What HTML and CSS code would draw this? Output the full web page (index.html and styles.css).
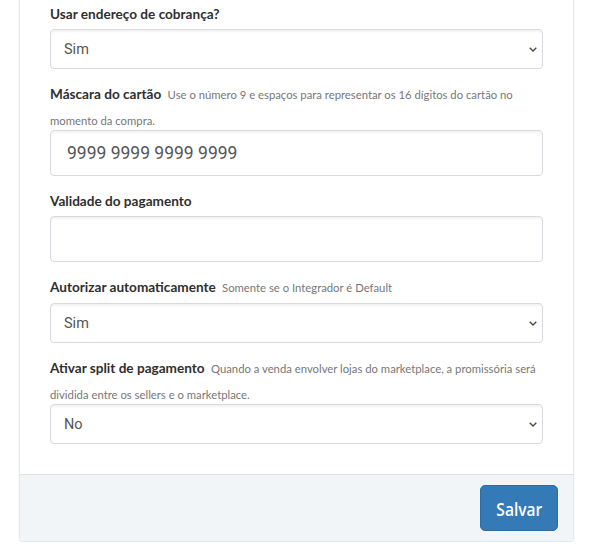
FILE: index.html
```html
<!DOCTYPE html>
<html lang="pt-BR">
<head>
<meta charset="utf-8">
<title>Pagamento</title>
<link rel="stylesheet" href="styles.css">
</head>
<body>
<div class="card">
  <div class="card-body">
    <div class="form-group">
      <label class="field-label">Usar endereço de cobrança?</label>
      <div class="select-wrap">
        <select class="form-control"><option>Sim</option><option>Não</option></select>
        <svg class="chevron" viewBox="0 0 8 5" width="8" height="5"><path d="M0.7 0.7 L4 4 L7.3 0.7" fill="none" stroke="#4a4a4a" stroke-width="1.4"/></svg>
      </div>
    </div>

    <div class="form-group">
      <label class="field-label field-label--wrap">Máscara do cartão <span class="help">Use o número 9 e espaços para representar os 16 dígitos do cartão no momento da compra.</span></label>
      <input class="form-control form-control--lg" type="text" value="9999 9999 9999 9999">
    </div>

    <div class="form-group">
      <label class="field-label">Validade do pagamento</label>
      <input class="form-control form-control--lg" type="text" value="">
    </div>

    <div class="form-group">
      <label class="field-label">Autorizar automaticamente <span class="help">Somente se o Integrador é Default</span></label>
      <div class="select-wrap">
        <select class="form-control"><option>Sim</option><option>Não</option></select>
        <svg class="chevron" viewBox="0 0 8 5" width="8" height="5"><path d="M0.7 0.7 L4 4 L7.3 0.7" fill="none" stroke="#4a4a4a" stroke-width="1.4"/></svg>
      </div>
    </div>

    <div class="form-group">
      <label class="field-label field-label--wrap">Ativar split de pagamento <span class="help">Quando a venda envolver lojas do marketplace, a promissória será dividida entre os sellers e o marketplace.</span></label>
      <div class="select-wrap">
        <select class="form-control"><option>No</option><option>Yes</option></select>
        <svg class="chevron" viewBox="0 0 8 5" width="8" height="5"><path d="M0.7 0.7 L4 4 L7.3 0.7" fill="none" stroke="#4a4a4a" stroke-width="1.4"/></svg>
      </div>
    </div>
  </div>
  <div class="card-footer">
    <button class="btn-primary" type="button"><span class="btn-text">Salvar</span></button>
  </div>
</div>
</body>
</html>
```

FILE: styles.css
```css
html, body {
  margin: 0;
  padding: 0;
  background: #ffffff;
}

body {
  font-family: Lato, "Open Sans", "Liberation Sans", sans-serif;
  color: #333333;
}

.card {
  margin: -16px 0 0 19px;
  width: 555px;
  box-sizing: border-box;
  background: #ffffff;
  border: 1px solid #e3e6ea;
  border-radius: 4px;
  box-shadow: 0 1px 2px rgba(0, 0, 0, 0.05);
}

.card-body {
  padding: 19px 30px 15px;
}

.form-group {
  margin-bottom: 15px;
}

.field-label {
  display: block;
  font-size: 13.6px;
  font-weight: 700;
  line-height: 20px;
  color: #2f2f2f;
  margin-bottom: 5px;
}

.field-label--wrap {
  line-height: 26px;
  margin-top: -3px;
  margin-bottom: -3px;
}

.help {
  font-size: 11.3px;
  font-weight: 400;
  line-height: 20px;
  color: #777777;
  margin-left: 3px;
}

.select-wrap {
  position: relative;
}

.form-control {
  display: block;
  width: 100%;
  box-sizing: border-box;
  height: 40px;
  padding: 0 13px;
  margin: 0;
  font-family: Roboto, "Liberation Sans", sans-serif;
  font-size: 14.5px;
  color: #555555;
  background: #ffffff;
  border: 1px solid #d7dade;
  border-radius: 4px;
  box-shadow: inset 0 2px 2px rgba(0, 0, 0, 0.05);
  outline: none;
  -webkit-appearance: none;
  appearance: none;
}

.form-control--lg {
  height: 46px;
  padding: 0 16px;
  font-size: 17.5px;
}

.chevron {
  position: absolute;
  right: 6px;
  top: 50%;
  margin-top: -2px;
  pointer-events: none;
}

.card-footer {
  display: flex;
  justify-content: flex-end;
  padding: 10px 15px 10px;
  background: #f2f5f8;
  border-top: 1px solid #dde2e7;
  border-radius: 0 0 4px 4px;
}

.btn-primary {
  width: 78px;
  height: 46px;
  padding: 0;
  background: #337ab7;
  border: 1px solid #2e6da4;
  border-radius: 5px;
  color: #ffffff;
  font-family: "Open Sans", Lato, sans-serif;
  font-size: 18.5px;
  font-weight: 600;
  cursor: pointer;
}

.btn-text {
  display: inline-block;
  transform: scaleX(0.84);
}
```
